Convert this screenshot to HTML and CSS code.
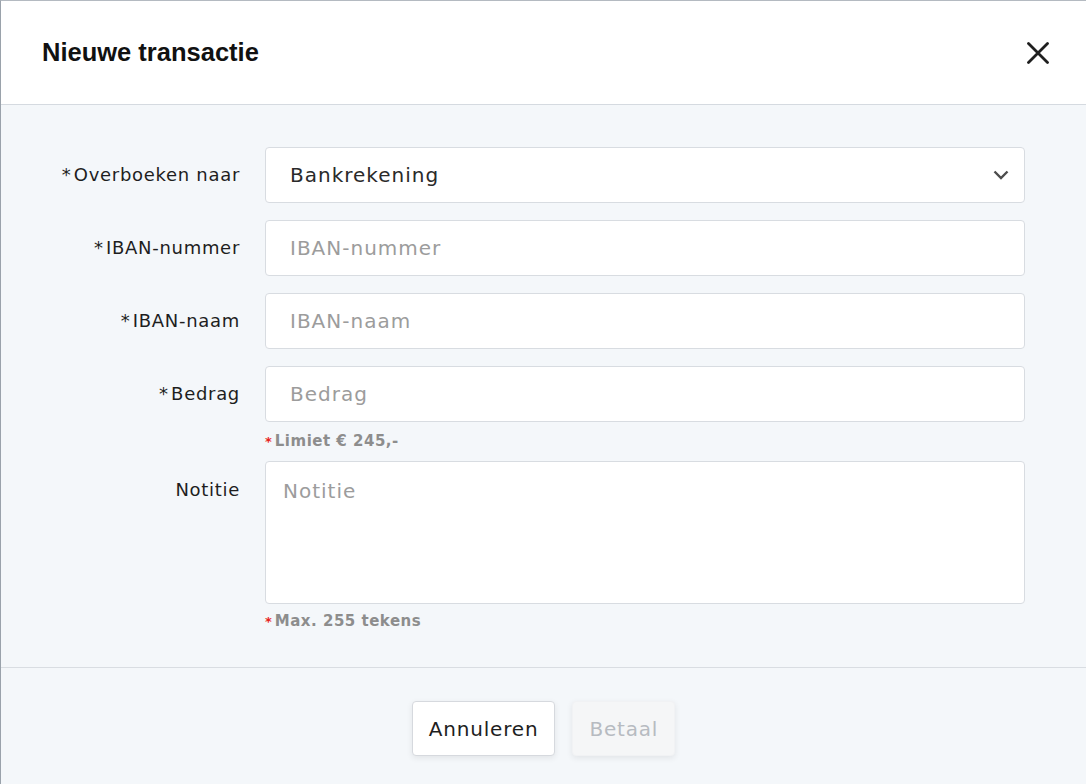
FILE: index.html
```html
<!DOCTYPE html>
<html>
<head>
  <title>Nieuwe transactie</title>
  <link rel="stylesheet" href="styles.css">
</head>
<body>
  <div class="modal">
    <div class="modal-header">
      <h1>Nieuwe transactie</h1>
      <button class="close" aria-label="Sluiten">
        <svg width="22" height="22" viewBox="0 0 22 22">
          <path d="M1.5 1.5 L20.5 20.5 M20.5 1.5 L1.5 20.5" stroke="#1f1f1f" stroke-width="2.8" stroke-linecap="round"/>
        </svg>
      </button>
    </div>

    <div class="modal-body">
      <div class="field">
        <label for="target"><span class="req">*</span>Overboeken naar</label>
        <div class="select-wrap">
          <select id="target">
            <option>Bankrekening</option>
          </select>
          <svg class="chevron" width="16" height="10" viewBox="0 0 16 10">
            <path d="M1.5 1.5 L8 8 L14.5 1.5" fill="none" stroke="#4d4d4d" stroke-width="2.4"/>
          </svg>
        </div>
      </div>

      <div class="field">
        <label for="iban"><span class="req">*</span>IBAN-nummer</label>
        <input type="text" id="iban" placeholder="IBAN-nummer">
      </div>

      <div class="field">
        <label for="name"><span class="req">*</span>IBAN-naam</label>
        <input type="text" id="name" placeholder="IBAN-naam">
      </div>

      <div class="field has-hint">
        <label for="amount"><span class="req">*</span>Bedrag</label>
        <div>
          <input type="text" id="amount" placeholder="Bedrag">
          <div class="hint"><span class="star">*</span>Limiet € 245,-</div>
        </div>
      </div>

      <div class="field field-top">
        <label for="note">Notitie</label>
        <div>
          <textarea id="note" placeholder="Notitie"></textarea>
          <div class="hint"><span class="star">*</span>Max. 255 tekens</div>
        </div>
      </div>
    </div>

    <div class="modal-footer">
      <button class="btn">Annuleren</button>
      <button class="btn btn-disabled" disabled>Betaal</button>
    </div>
  </div>
</body>
</html>
```

FILE: styles.css
```css
body {
  margin: 0;
  font-family: "DejaVu Sans", sans-serif;
  background: #f4f7fa;
}

.modal {
  width: 1086px;
  height: 784px;
  box-sizing: border-box;
  border-top: 1px solid #b4bac1;
  border-left: 1px solid #9aa2ab;
  background: #f4f7fa;
  overflow: hidden;
}

.modal-header {
  height: 103px;
  background: #fff;
  border-bottom: 1px solid #d5dae0;
  display: flex;
  align-items: center;
  justify-content: space-between;
  padding: 0 37px 0 41px;
}

h1 {
  margin: 0;
  font-family: "Liberation Sans", Arial, sans-serif;
  font-size: 25.5px;
  font-weight: bold;
  color: #111;
}

.close {
  border: 0;
  background: none;
  padding: 0;
  width: 22px;
  height: 22px;
  cursor: pointer;
}

.modal-body {
  padding: 42px 0 35px 0;
  border-bottom: 1px solid #d9dde2;
}

.field {
  display: grid;
  grid-template-columns: 239px 760px;
  column-gap: 25px;
  align-items: start;
  margin-bottom: 17px;
}

.field.has-hint {
  margin-bottom: 9px;
}

.field.field-top {
  margin-bottom: 0;
}

label {
  text-align: right;
  font-size: 18px;
  letter-spacing: 0.7px;
  color: #1e1e1e;
  line-height: 56px;
}

.field-top label {
  line-height: 22px;
  padding-top: 18px;
}

.req {
  margin-right: 3px;
  letter-spacing: 0;
}

input[type="text"],
select,
textarea {
  display: block;
  width: 760px;
  height: 56px;
  box-sizing: border-box;
  border: 1px solid #d8dce1;
  border-radius: 4px;
  background: #fff;
  font-family: "DejaVu Sans", sans-serif;
  font-size: 20px;
  letter-spacing: 1px;
  color: #2a2a2a;
  padding: 0 24px;
  outline: none;
}

select {
  -webkit-appearance: none;
  appearance: none;
}

textarea {
  height: 143px;
  padding: 17px 17px;
  resize: none;
  line-height: 24px;
}

::placeholder {
  color: #9c9c9c;
}

.select-wrap {
  position: relative;
}

.chevron {
  position: absolute;
  right: 16px;
  top: 23px;
}

.hint {
  margin-top: 9px;
  font-size: 15px;
  letter-spacing: 0.5px;
  line-height: 20px;
  font-weight: bold;
  color: #8d8d8d;
}

.field-top .hint {
  margin-top: 7px;
}

.star {
  color: #e8231c;
  font-size: 13px;
  margin-right: 3px;
  letter-spacing: 0;
}

.modal-footer {
  display: flex;
  justify-content: center;
  gap: 17px;
  padding-top: 33px;
}

.btn {
  height: 55px;
  padding: 0 16px;
  border: 1px solid #d6d9de;
  border-radius: 4px;
  background: #fff;
  font-family: "DejaVu Sans", sans-serif;
  font-size: 20px;
  letter-spacing: 0.8px;
  color: #1e1e1e;
  box-shadow: 0 2px 6px rgba(0, 0, 0, 0.08);
}

.btn-disabled {
  border-color: #f1f2f4;
  background: #f5f6f7;
  color: #b7bbc1;
}
```
